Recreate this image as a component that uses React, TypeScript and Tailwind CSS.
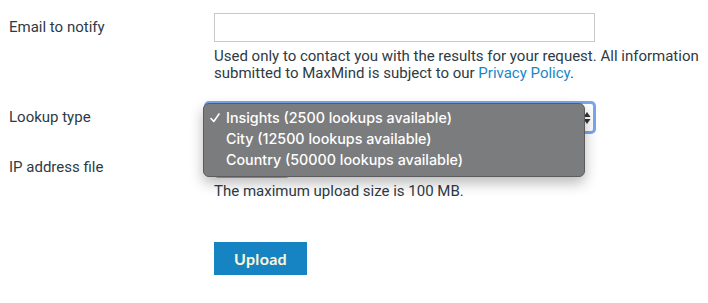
import React from "react";

export default function App() {
  return (
    <div className="relative w-[708px] h-[303px] bg-white text-[15px] text-[#2e3a45]" style={{ fontFamily: "Roboto, 'Liberation Sans', sans-serif" }}>
      <div className="grid grid-cols-[205px_1fr] pl-[9px] pt-[13px]">
        {/* Row 1 */}
        <div className="h-[29px] flex items-center">Email to notify</div>
        <div>
          <div className="w-[381px] h-[29px] border border-[#c8c8c8] bg-white" />
          <p className="mt-[6px] leading-[17px] whitespace-nowrap">
            Used only to contact you with the results for your request. All information
            <br />
            submitted to MaxMind is subject to our <span className="text-[#1a87c6]">Privacy Policy</span>.
          </p>
        </div>

        {/* Row 2 */}
        <div className="mt-[19px] h-[32px] flex items-center">Lookup type</div>
        <div className="mt-[19px] -ml-[10px]">
          <div className="relative w-[392px] h-[33px] rounded-[5px] border-[3px] border-[#79a6ee] bg-white">
            <svg className="absolute right-[2px] top-[7px]" width="8" height="14" viewBox="0 0 8 14">
              <path d="M4 1 L7.5 6 L0.5 6 Z" fill="#333" />
              <path d="M4 13 L7.5 8 L0.5 8 Z" fill="#333" />
            </svg>
          </div>
        </div>

        {/* Row 3 */}
        <div className="mt-[22px] h-[22px] flex items-center">IP address file</div>
        <div className="mt-[22px]">
          <div className="w-[76px] h-[22px] rounded-[4px] border border-[#aaa] bg-[#f4f4f4]" />
          <p className="mt-[5px] leading-[17px]">The maximum upload size is 100 MB.</p>
          <button
            className="mt-[42px] w-[93px] h-[33px] bg-[#1684c2] text-[#fdf7da] text-[16px] font-bold tracking-[0.3px]"
            style={{ fontFamily: "Lato, 'Open Sans', sans-serif" }}
          >
            Upload
          </button>
        </div>
      </div>

      {/* Dropdown popup */}
      <div
        className="absolute left-[203px] top-[103px] w-[382px] h-[74px] rounded-[6px] bg-[#7b7c7e] border border-[#5c5c5e] shadow-[0_6px_14px_rgba(0,0,0,0.28)] text-white text-[14.3px] font-medium pt-[3px]"
        style={{ fontFamily: "Inter, 'Open Sans', sans-serif" }}
      >
        <div className="flex items-center h-[21px]">
          <span className="w-[22px] pl-[6px] flex items-center">
            <svg width="10" height="10" viewBox="0 0 10 10">
              <path d="M1 5.5 L3.8 8.5 L9 1" fill="none" stroke="white" strokeWidth="1.6" strokeLinecap="round" strokeLinejoin="round" />
            </svg>
          </span>
          <span>Insights (2500 lookups available)</span>
        </div>
        <div className="flex items-center h-[21px] pl-[22px]">City (12500 lookups available)</div>
        <div className="flex items-center h-[21px] pl-[22px]">Country (50000 lookups available)</div>
      </div>
    </div>
  );
}
